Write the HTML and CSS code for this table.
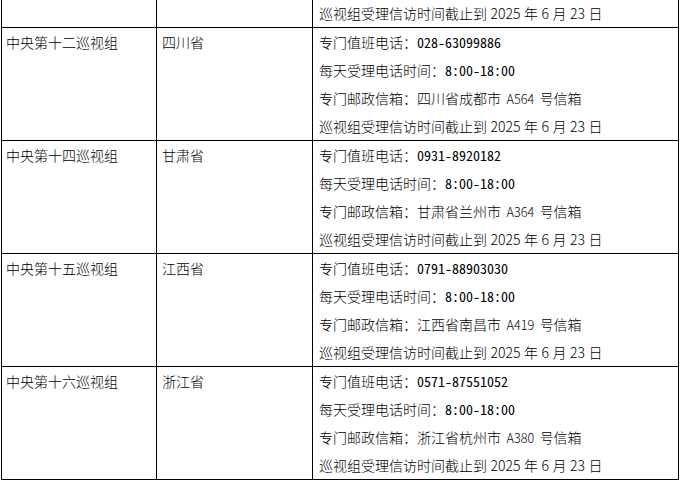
FILE: index.html
```html
<!DOCTYPE html>
<html lang="zh-CN">
<head>
<meta charset="utf-8">
<title>巡视组信息</title>
<link rel="stylesheet" href="styles.css">
</head>
<body>
<table class="info">
  <colgroup>
    <col class="c1">
    <col class="c2">
    <col class="c3">
  </colgroup>
  <tr class="first">
    <td class="name"></td>
    <td class="prov"></td>
    <td class="detail"><p>巡视组受理信访时间截止到<span class="sp"> </span><span class="d">2025</span><span class="sp"> </span>年<span class="sp"> </span><span class="d">6</span><span class="sp"> </span>月<span class="sp"> </span><span class="d">23</span><span class="sp"> </span>日</p></td>
  </tr>
  <tr>
    <td class="name">中央第十二巡视组</td>
    <td class="prov">四川省</td>
    <td class="detail">
      <p>专门值班电话：<span class="n">028-63099886</span></p>
      <p>每天受理电话时间：<span class="n">8:00-18:00</span></p>
      <p>专门邮政信箱：四川省成都市<span class="sw"> </span><span class="m">A564</span><span class="sw"> </span>号信箱</p>
      <p>巡视组受理信访时间截止到<span class="sp"> </span><span class="d">2025</span><span class="sp"> </span>年<span class="sp"> </span><span class="d">6</span><span class="sp"> </span>月<span class="sp"> </span><span class="d">23</span><span class="sp"> </span>日</p>
    </td>
  </tr>
  <tr>
    <td class="name">中央第十四巡视组</td>
    <td class="prov">甘肃省</td>
    <td class="detail">
      <p>专门值班电话：<span class="n">0931-8920182</span></p>
      <p>每天受理电话时间：<span class="n">8:00-18:00</span></p>
      <p>专门邮政信箱：甘肃省兰州市<span class="sw"> </span><span class="m">A364</span><span class="sw"> </span>号信箱</p>
      <p>巡视组受理信访时间截止到<span class="sp"> </span><span class="d">2025</span><span class="sp"> </span>年<span class="sp"> </span><span class="d">6</span><span class="sp"> </span>月<span class="sp"> </span><span class="d">23</span><span class="sp"> </span>日</p>
    </td>
  </tr>
  <tr>
    <td class="name">中央第十五巡视组</td>
    <td class="prov">江西省</td>
    <td class="detail">
      <p>专门值班电话：<span class="n">0791-88903030</span></p>
      <p>每天受理电话时间：<span class="n">8:00-18:00</span></p>
      <p>专门邮政信箱：江西省南昌市<span class="sw"> </span><span class="m">A419</span><span class="sw"> </span>号信箱</p>
      <p>巡视组受理信访时间截止到<span class="sp"> </span><span class="d">2025</span><span class="sp"> </span>年<span class="sp"> </span><span class="d">6</span><span class="sp"> </span>月<span class="sp"> </span><span class="d">23</span><span class="sp"> </span>日</p>
    </td>
  </tr>
  <tr>
    <td class="name">中央第十六巡视组</td>
    <td class="prov">浙江省</td>
    <td class="detail">
      <p>专门值班电话：<span class="n">0571-87551052</span></p>
      <p>每天受理电话时间：<span class="n">8:00-18:00</span></p>
      <p>专门邮政信箱：浙江省杭州市<span class="sw"> </span><span class="m">A380</span><span class="sw"> </span>号信箱</p>
      <p>巡视组受理信访时间截止到<span class="sp"> </span><span class="d">2025</span><span class="sp"> </span>年<span class="sp"> </span><span class="d">6</span><span class="sp"> </span>月<span class="sp"> </span><span class="d">23</span><span class="sp"> </span>日</p>
    </td>
  </tr>
</table>
</body>
</html>
```
FILE: styles.css
```css
html, body {
  margin: 0;
  padding: 0;
  background: #ffffff;
}

body {
  font-family: "Noto Sans CJK SC", "Noto Sans", sans-serif;
  font-size: 14px;
  font-weight: 300;
  color: #000000;
}

.info {
  margin-left: 1px;
  border-collapse: collapse;
  table-layout: fixed;
  width: 677px;
}

.c1 { width: 155px; }
.c2 { width: 156px; }
.c3 { width: 366px; }

.info td {
  border: 1px solid #000000;
  vertical-align: top;
  line-height: 28px;
  white-space: nowrap;
}

.info td.name { padding: 0 0 0 4px; }
.info td.prov { padding: 0 0 0 5px; }
.info td.detail { padding: 0 0 0 6px; }

.info .first td {
  border-top: none;
  height: 27px;
  line-height: 27px;
}

.info p {
  margin: 0;
  height: 28px;
}

.info .first p {
  height: 27px;
}

.n {
  font-family: "Noto Sans Mono CJK SC", "Liberation Mono", monospace;
  font-size: 14px;
  font-weight: 400;
}

.m {
  font-size: 12.6px;
}

.d {
  font-size: 14px;
}

.sp {
  display: inline-block;
  width: 3.5px;
}

.sw {
  display: inline-block;
  width: 5.5px;
}
```
